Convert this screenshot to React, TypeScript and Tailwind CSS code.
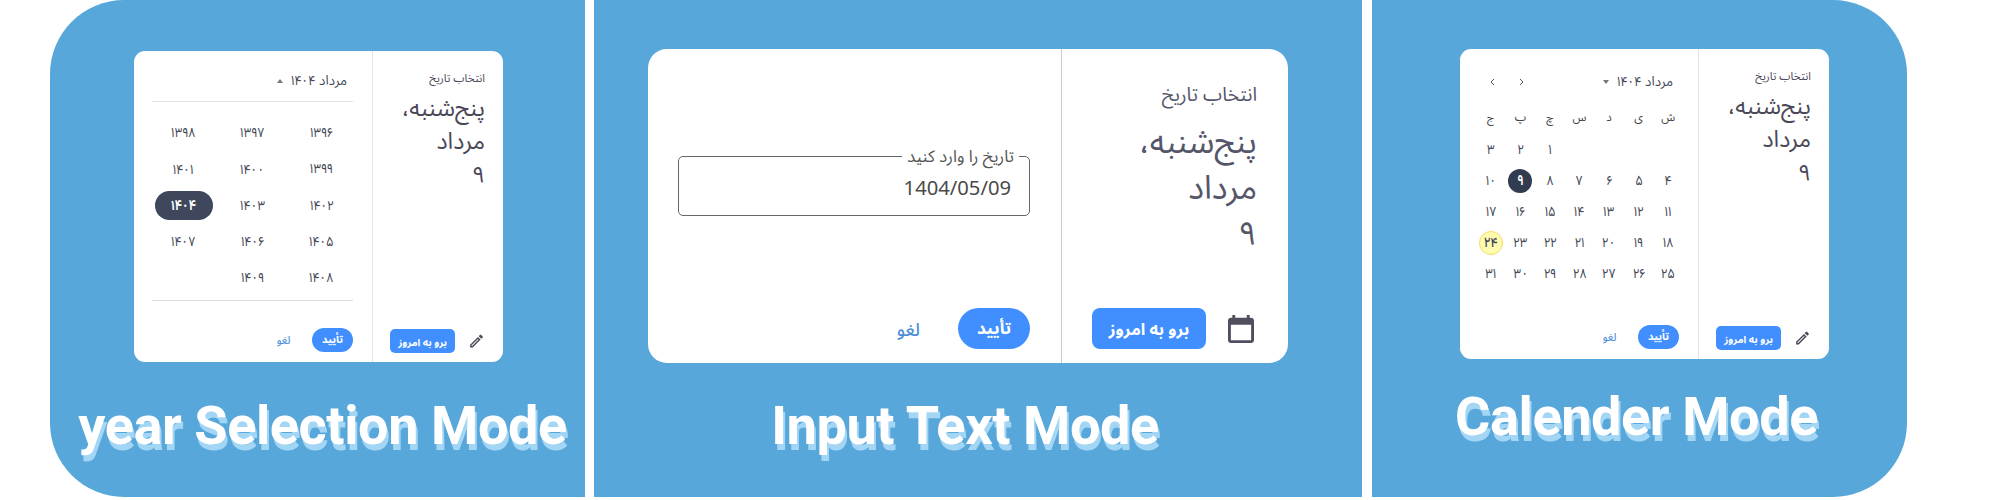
import type { ReactNode } from "react";

const YEARS = ["۱۳۹۶", "۱۳۹۷", "۱۳۹۸", "۱۳۹۹", "۱۴۰۰", "۱۴۰۱", "۱۴۰۲", "۱۴۰۳", "۱۴۰۴", "۱۴۰۵", "۱۴۰۶", "۱۴۰۷", "۱۴۰۸", "۱۴۰۹"];
const WEEKDAYS = ["ش", "ی", "د", "س", "چ", "پ", "ج"];
const DIGITS = "۰۱۲۳۴۵۶۷۸۹";
const toPersian = (n: number) => String(n).replace(/\d/g, (d) => DIGITS[Number(d)]);
const DAYS = ["", "", "", "", ...Array.from({ length: 31 }, (_, i) => toPersian(i + 1))];

/* Condensed Persian numerals with a dot-shaped zero. */
function Num({ value, className = "" }: { value: string; className?: string }) {
  return (
    <span dir="ltr" className={`inline-block scale-x-[0.86] font-['Vazirmatn','Noto_Sans_Arabic',sans-serif] text-[14px] leading-[20px] ${className}`}>
      {value.split(/(۰)/).map((part, i) =>
        part === "۰" ? (
          <span key={i} className="font-['Noto_Sans_Arabic',sans-serif] tracking-[-1px]">{part}</span>
        ) : (
          part
        ),
      )}
    </span>
  );
}

function PencilIcon() {
  return (
    <svg viewBox="0 0 24 24" className="h-[18px] w-[17px] fill-[#4b4858]">
      <path d="M14.06 9.02l.92.92L5.92 19H5v-.92l9.06-9.06M17.66 3c-.25 0-.51.1-.7.29l-1.83 1.83 3.75 3.75 1.83-1.83c.39-.39.39-1.02 0-1.41l-2.34-2.34c-.2-.2-.45-.29-.71-.29zm-3.6 3.19L3 17.25V21h3.75L17.81 9.94l-3.75-3.75z" />
    </svg>
  );
}

function CalendarIcon() {
  return (
    <svg viewBox="3 1 18 20" preserveAspectRatio="none" className="h-[28px] w-[26px] fill-[#504f60]">
      <path d="M19 3h-1V1h-2v2H8V1H6v2H5c-1.11 0-1.99.9-1.99 2L3 19c0 1.1.89 2 2 2h14c1.1 0 2-.9 2-2V5c0-1.1-.9-2-2-2zm0 16H5V8h14v11z" />
    </svg>
  );
}

function Caption({ children, className }: { children: ReactNode; className: string }) {
  return (
    <h2
      dir="ltr"
      className={`w-full whitespace-nowrap text-center font-['Roboto',sans-serif] text-[54px] leading-[64px] font-bold tracking-[-0.4px] text-white [text-shadow:2px_6px_0_#a3d5f5] ${className}`}
    >
      {children}
    </h2>
  );
}

function Panel({ children, className }: { children: ReactNode; className: string }) {
  return <section className={`flex h-[497px] shrink-0 flex-col bg-[#57a7db] ${className}`}>{children}</section>;
}

function SmallSide() {
  return (
    <aside className="flex w-[131px] shrink-0 flex-col border-l border-[#e2e2ea] pr-[18px] text-[#4b4858]">
      <div className="mt-[16px] h-[22px] text-[11.3px] leading-[22px]">انتخاب تاریخ</div>
      <div className="mt-[3px] text-[23.3px] leading-[33px]">
        <div>پنج‌شنبه،</div>
        <div>مرداد</div>
        <div>۹</div>
      </div>
      <div className="mt-auto mb-[9px] flex h-[24px] items-center gap-[13px]">
        <PencilIcon />
        <button className="h-[24px] w-[65px] rounded-[5px] bg-[#418fff] text-[10px] leading-[27px] font-bold whitespace-nowrap text-white">
          برو به امروز
        </button>
      </div>
    </aside>
  );
}

function SmallActions() {
  return (
    <div className="mt-auto mb-[10px] flex h-[24px] items-start">
      <button className="h-[24px] w-[41px] rounded-full bg-[#418fff] text-[10.5px] leading-[25px] font-bold text-white">تأیید</button>
      <button className="ml-[6px] w-[57px] text-center text-[10.5px] leading-[26px] font-medium text-[#4f8fd8]">لغو</button>
    </div>
  );
}

function MonthLabel() {
  return (
    <span className="flex items-center text-[13.4px]">
      مرداد
      <Num value="۱۴۰۴" className="mr-[2px]" />
    </span>
  );
}

function YearCard() {
  return (
    <div dir="rtl" className="mt-[51px] ml-[84px] flex h-[311px] w-[369px] rounded-[11px] bg-white">
      <SmallSide />
      <div className="flex flex-1 flex-col pr-[19px] pl-[18px] text-[#434855]">
        <div className="flex h-[51px] items-center border-b border-[#e3e3e3] pt-[11px] pr-[6px]">
          <MonthLabel />
          <svg viewBox="0 0 6 4" className="mr-[6px] mb-[2px] h-[4px] w-[6px] fill-[#777]"><path d="M0 4L3 0L6 4Z" /></svg>
        </div>
        <div className="grid h-[199px] grid-cols-[63px_75px_63px] content-start border-b border-[#dcdcde] pt-[13px]">
          {YEARS.map((y) => (
            <div key={y} className="flex h-[36px] items-center justify-center">
              {y === "۱۴۰۴" ? (
                <span className="flex h-[29px] w-[58px] shrink-0 items-center justify-center rounded-full bg-[#3e475b] text-white">
                  <Num value={y} className="pt-[2px] font-bold" />
                </span>
              ) : (
                <Num value={y} className="pt-[2px]" />
              )}
            </div>
          ))}
        </div>
        <SmallActions />
      </div>
    </div>
  );
}

function InputCard() {
  return (
    <div dir="rtl" className="mt-[49px] ml-[54px] flex h-[314px] w-[640px] rounded-[19px] bg-white">
      <aside className="flex w-[227px] shrink-0 flex-col border-l border-[#c9cad6] pr-[31px] text-[#55566a]">
        <div className="mt-[28px] text-[19.3px] leading-[36px]">انتخاب تاریخ</div>
        <div className="mt-[7px] text-[33px] leading-[46px]">
          <div>پنج‌شنبه،</div>
          <div>مرداد</div>
          <div>۹</div>
        </div>
        <div className="mt-auto mb-[14px] flex h-[41px] items-center pr-[3px]">
          <CalendarIcon />
          <button className="mr-[22px] h-[41px] w-[114px] rounded-[8px] bg-[#418fff] text-[16.5px] leading-[44px] font-bold whitespace-nowrap text-white">
            برو به امروز
          </button>
        </div>
      </aside>
      <div className="flex flex-1 flex-col pr-[31px] pl-[30px]">
        <fieldset dir="rtl" className="mt-[97px] h-[70px] rounded-[5px] border border-[#666] pr-[10px]">
          <legend className="h-[20px] px-[5px] text-[16.7px] leading-[22px] text-[#555]">تاریخ را وارد کنید</legend>
          <div className="pr-[8px] text-[20.2px] leading-[42px] text-[#4a4a4a]">
            <span dir="ltr" className="font-['Noto_Sans',sans-serif]">1404/05/09</span>
          </div>
        </fieldset>
        <div className="mt-auto mb-[14px] flex h-[41px] items-start">
          <button className="h-[41px] w-[72px] rounded-[21px] bg-[#418fff] text-[17px] leading-[43px] font-bold text-white">تأیید</button>
          <button className="mr-[38px] text-[18px] leading-[44px] font-medium text-[#4f8fd8]">لغو</button>
        </div>
      </div>
    </div>
  );
}

function CalendarCard() {
  return (
    <div dir="rtl" className="mt-[49px] ml-[88px] flex h-[310px] w-[369px] rounded-[11px] bg-white">
      <SmallSide />
      <div className="flex flex-1 flex-col pr-[19px] pl-[18px] text-[#434855]">
        <div className="flex h-[50px] items-center pt-[16px] pr-[6px]">
          <MonthLabel />
          <svg viewBox="0 0 6 4" className="mr-[6px] h-[4px] w-[6px] fill-[#777]"><path d="M0 0L3 4L6 0Z" /></svg>
          <svg viewBox="0 0 5 8" className="mr-auto h-[8px] w-[5px] fill-none stroke-[#555]"><path d="M1 1L4 4L1 7" /></svg>
          <svg viewBox="0 0 5 8" className="mr-[24px] ml-[14px] h-[8px] w-[5px] fill-none stroke-[#555]"><path d="M4 1L1 4L4 7" /></svg>
        </div>
        <div className="mr-[-4px] grid h-[35px] w-[207px] grid-cols-7">
          {WEEKDAYS.map((d) => (
            <div key={d} className="text-center text-[11.5px] leading-[36px] text-[#444]">{d}</div>
          ))}
        </div>
        <div className="mr-[-4px] grid w-[207px] grid-cols-7">
          {DAYS.map((d, i) => (
            <div key={i} className="flex h-[31px] items-center justify-center">
              {d === "۹" ? (
                <span className="flex size-[24px] items-center justify-center rounded-full bg-[#323c50] text-white">
                  <Num value={d} className="pt-[2px] font-bold" />
                </span>
              ) : d === "۲۴" ? (
                <span className="flex size-[24px] items-center justify-center rounded-full border-[1.5px] border-[#f5dc66] bg-[#fffcb0]">
                  <Num value={d} className="pt-[2px] font-medium" />
                </span>
              ) : (
                <Num value={d} className="pt-[2px]" />
              )}
            </div>
          ))}
        </div>
        <SmallActions />
      </div>
    </div>
  );
}

export default function App() {
  return (
    <main className="flex h-[500px] w-[2000px] overflow-hidden bg-white pl-[50px] font-['Noto_Sans_Arabic','Noto_Sans',sans-serif]">
      <Panel className="w-[535px] rounded-l-[74px]">
        <YearCard />
        <Caption className="mt-[32px] pl-[10px]">year Selection Mode</Caption>
      </Panel>
      <Panel className="ml-[9px] w-[768px]">
        <InputCard />
        <Caption className="mt-[31px] pr-[26px]">Input Text Mode</Caption>
      </Panel>
      <Panel className="ml-[10px] w-[535px] rounded-r-[74px]">
        <CalendarCard />
        <Caption className="mt-[26px] pr-[6px]">Calender Mode</Caption>
      </Panel>
    </main>
  );
}
